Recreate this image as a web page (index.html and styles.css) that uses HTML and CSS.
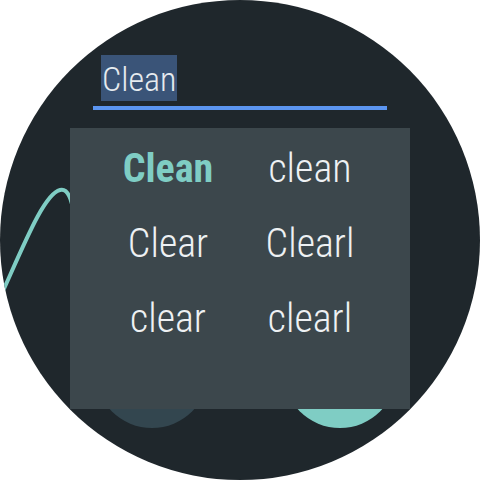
FILE: index.html
```html
<!DOCTYPE html>
<html>
<head>
<meta charset="utf-8">
<link rel="stylesheet" href="styles.css">
</head>
<body>
<div class="watch">
  <svg class="backdrop" width="480" height="480" viewBox="0 0 480 480">
    <path d="M -20 340 C 15 270, 40 195, 60 190 C 68 188, 72 200, 74 215" fill="none" stroke="#7fcdc4" stroke-width="4"/>
    <circle cx="152" cy="371" r="57" fill="#33464f"/>
    <circle cx="340" cy="371" r="57" fill="#7fcdc4"/>
  </svg>
  <div class="field">
    <span class="sel">Clean</span>
  </div>
  <div class="underline"></div>
  <div class="panel">
    <div class="cell primary">Clean</div>
    <div class="cell">clean</div>
    <div class="cell">Clear</div>
    <div class="cell">Clearl</div>
    <div class="cell">clear</div>
    <div class="cell">clearl</div>
  </div>
</div>
</body>
</html>
```
FILE: styles.css
```css
html, body {
  margin: 0;
  padding: 0;
  background: #ffffff;
}
.watch {
  position: relative;
  width: 480px;
  height: 480px;
  border-radius: 50%;
  overflow: hidden;
  background: #1f272c;
  font-family: "Roboto Condensed", Roboto, "Liberation Sans", sans-serif;
  font-stretch: condensed;
}
.backdrop {
  position: absolute;
  left: 0;
  top: 0;
}
.field {
  position: relative;
  padding-top: 55px;
  margin-left: 101px;
  height: 46px;
}
.sel {
  display: inline-block;
  height: 46px;
  line-height: 48px;
  padding: 0 1px;
  background: #3a5478;
  color: #e6ebef;
  font-size: 34px;
  font-weight: 300;
}
.underline {
  position: relative;
  margin: 5px 0 0 93px;
  width: 294px;
  height: 4px;
  background: #5b95f0;
}
.panel {
  position: relative;
  margin: 18px 0 0 70px;
  width: 340px;
  height: 281px;
  box-sizing: border-box;
  padding: 3px 0 0 27px;
  background: #3c474c;
  display: grid;
  grid-template-columns: 142px 142px;
  grid-auto-rows: 75px;
}
.cell {
  text-align: center;
  line-height: 75px;
  font-size: 40px;
  font-weight: 300;
  color: #eef1f3;
}
.cell.primary {
  font-weight: 700;
  color: #7fcdc4;
}
```
